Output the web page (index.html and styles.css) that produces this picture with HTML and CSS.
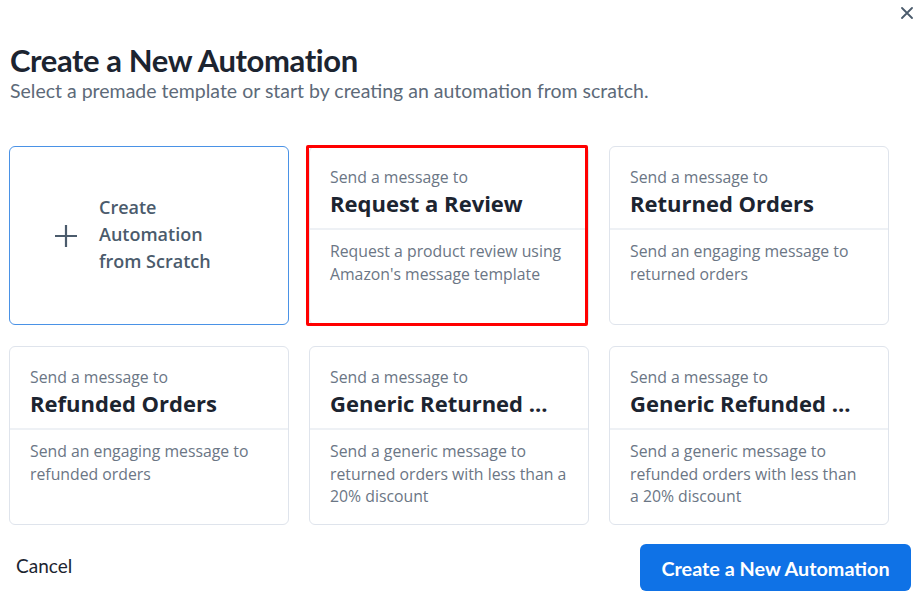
FILE: index.html
```html
<!DOCTYPE html>
<html lang="en">
<head>
<meta charset="utf-8">
<title>Create a New Automation</title>
<link rel="stylesheet" href="styles.css">
</head>
<body>
<div class="modal">
  <div class="topbar">
    <button class="close" aria-label="Close">
      <svg width="12" height="12" viewBox="0 0 12 12"><path d="M1 1L11 11M11 1L1 11" stroke="#4b5b6c" stroke-width="1.8" stroke-linecap="round"/></svg>
    </button>
  </div>
  <header class="head">
    <h1 class="title">Create a New Automation</h1>
    <p class="subtitle">Select a premade template or start by creating an automation from scratch.</p>
  </header>
  <div class="grid">
    <div class="card card-scratch">
      <span class="plus">
        <svg width="24" height="24" viewBox="0 0 24 24"><path d="M12 1V23M1 12H23" stroke="#4b5b6c" stroke-width="2.2"/></svg>
      </span>
      <span class="scratch-text">Create<br>Automation<br>from Scratch</span>
    </div>
    <div class="card card-selected">
      <div class="card-head">
        <div class="card-sub">Send a message to</div>
        <div class="card-title">Request a Review</div>
      </div>
      <div class="card-desc">Request a product review using Amazon's message template</div>
    </div>
    <div class="card">
      <div class="card-head">
        <div class="card-sub">Send a message to</div>
        <div class="card-title">Returned Orders</div>
      </div>
      <div class="card-desc">Send an engaging message to returned orders</div>
    </div>
    <div class="card">
      <div class="card-head">
        <div class="card-sub">Send a message to</div>
        <div class="card-title">Refunded Orders</div>
      </div>
      <div class="card-desc">Send an engaging message to refunded orders</div>
    </div>
    <div class="card">
      <div class="card-head">
        <div class="card-sub">Send a message to</div>
        <div class="card-title">Generic Returned ...</div>
      </div>
      <div class="card-desc">Send a generic message to returned orders with less than a 20% discount</div>
    </div>
    <div class="card">
      <div class="card-head">
        <div class="card-sub">Send a message to</div>
        <div class="card-title">Generic Refunded ...</div>
      </div>
      <div class="card-desc">Send a generic message to refunded orders with less than a 20% discount</div>
    </div>
  </div>
  <footer class="foot">
    <button class="cancel">Cancel</button>
    <button class="primary">Create a New Automation</button>
  </footer>
</div>
</body>
</html>
```

FILE: styles.css
```css
* { box-sizing: border-box; }
html, body { margin: 0; padding: 0; background: #ffffff; }
body { font-family: "Open Sans", "Noto Sans", sans-serif; color: #1f2733; }

.modal {
  width: 924px;
  height: 603px;
  padding: 0 13px 0 9px;
  display: flex;
  flex-direction: column;
}

.topbar {
  display: flex;
  justify-content: flex-end;
  height: 28px;
  padding-top: 7px;
}
.close {
  border: 0;
  background: none;
  padding: 0;
  width: 12px;
  height: 12px;
  margin-right: -2px;
  cursor: pointer;
  display: flex;
}

.head { padding-left: 1px; }
.title {
  font-family: Lato, "Liberation Sans", sans-serif;
  font-weight: 700;
  font-size: 31px;
  line-height: 36px;
  margin: 14px 0 0;
  color: #1c2430;
  letter-spacing: -0.4px;
}
.subtitle {
  font-family: Lato, "Liberation Sans", sans-serif;
  font-size: 19.5px;
  line-height: 24px;
  margin: 1px 0 0;
  color: #5d6a79;
}

.grid {
  margin-top: 43px;
  display: grid;
  grid-template-columns: repeat(3, 280px);
  grid-auto-rows: 179px;
  column-gap: 20px;
  row-gap: 21px;
}

.card {
  position: relative;
  border: 1px solid #dfe4ec;
  border-radius: 6px;
  background: #fff;
  display: flex;
  flex-direction: column;
}
.card-head {
  padding: 19px 20px 9px;
  border-bottom: 2px solid #eef1f5;
}
.card-sub {
  font-size: 15.8px;
  line-height: 22px;
  color: #6b7685;
}
.card-title {
  font-size: 22px;
  line-height: 31px;
  font-weight: 700;
  color: #1c2430;
  white-space: nowrap;
}
.card-desc {
  padding: 10px 20px 0;
  font-size: 15.8px;
  line-height: 22.5px;
  color: #6b7685;
}

.card-scratch {
  flex-direction: row;
  align-items: center;
  border: 1.5px solid #4a92e6;
  padding-left: 44px;
  gap: 21px;
}
.plus { display: flex; }
.scratch-text {
  font-size: 18px;
  line-height: 27px;
  font-weight: 600;
  color: #4b5b6c;
  margin-top: -2px;
}

.card-selected::after {
  content: "";
  position: absolute;
  left: -4px;
  top: -2px;
  right: 0px;
  bottom: -2px;
  border: 3px solid #ff0000;
  border-radius: 2px;
  pointer-events: none;
}

.foot {
  margin-top: 19px;
  display: flex;
  justify-content: space-between;
  align-items: center;
}
.cancel {
  border: 0;
  background: none;
  font-family: Lato, "Liberation Sans", sans-serif;
  font-size: 19px;
  color: #1c2430;
  padding: 0 0 0 7px;
  margin-top: -5px;
  cursor: pointer;
}
.primary {
  border: 0;
  background: #0f72e6;
  color: #fff;
  font-family: Lato, "Liberation Sans", sans-serif;
  font-weight: 700;
  font-size: 19.8px;
  width: 271px;
  height: 47px;
  border-radius: 6px;
  cursor: pointer;
  margin-right: 0;
}
```
